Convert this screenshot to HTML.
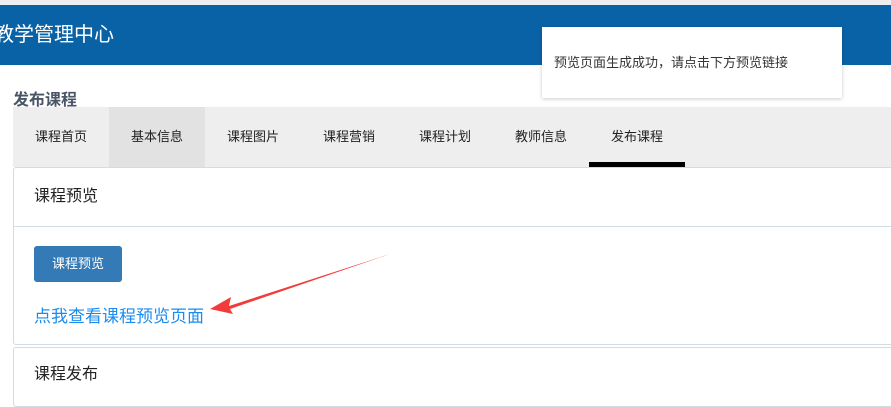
<!DOCTYPE html>
<html><head><meta charset="utf-8"><style>
body{margin:0;width:891px;height:405px;overflow:hidden;background:#fff;font-family:"Liberation Sans","Noto Sans CJK SC",sans-serif;position:relative}
.top{position:absolute;left:0;top:0;width:891px;height:5px;background:#eee}
.hdr{position:absolute;left:0;top:5px;width:891px;height:60px;background:#0a62a6;color:#fff;font-size:20px;line-height:60px}
.hdr span{position:absolute;left:-6px;top:0}
.toast{position:absolute;left:542px;top:27px;width:300px;height:71px;background:#fff;box-shadow:0 1px 4px rgba(0,0,0,.2);font-size:13px;color:#333;line-height:71px;box-sizing:border-box;padding-left:12px}
.h2{position:absolute;left:13px;top:86px;font-size:16px;font-weight:bold;color:#4a5566}
.tabs{position:absolute;left:13px;top:107px;width:878px;height:60px;background:#eee}
.tab{position:absolute;top:0;width:96px;height:60px;line-height:60px;text-align:center;font-size:13px;color:#222}
.p{position:absolute;left:13px;width:890px;background:#fff;border:1px solid #d5dbe3;border-radius:3px;box-sizing:border-box}
.ph{font-size:16px;color:#222;padding-left:20px}
</style></head><body>
<div class="top"></div>
<div class="hdr"><span>教学管理中心</span></div>
<div class="h2">发布课程</div>
<div class="tabs">
<div class="tab" style="left:0">课程首页</div>
<div class="tab" style="left:96px;background:#e2e2e2">基本信息</div>
<div class="tab" style="left:192px">课程图片</div>
<div class="tab" style="left:288px">课程营销</div>
<div class="tab" style="left:384px">课程计划</div>
<div class="tab" style="left:480px">教师信息</div>
<div class="tab" style="left:576px;border-bottom:5px solid #000;height:55px">发布课程</div>
</div>
<div class="p" style="top:167px;height:178px">
<div class="ph" style="height:58px;line-height:58px;border-bottom:1px solid #d5dbe3">课程预览</div>
<div style="position:absolute;left:20px;top:78px;width:88px;height:36px;background:#337ab7;border-radius:3px;color:#fff;font-size:13px;line-height:36px;text-align:center">课程预览</div>
<div style="position:absolute;left:20px;top:134px;font-size:17px;color:#1a8cf0">点我查看课程预览页面</div>
</div>
<svg style="position:absolute;left:0;top:0" width="891" height="405"><polygon points="390,254 229,306 231,297 210,309 233,314 230,309" fill="#f23c3c"/></svg>
<div class="p" style="top:347px;height:60px">
<div class="ph" style="line-height:54px">课程发布</div>
</div>
<div class="toast">预览页面生成成功，请点击下方预览链接</div>
</body></html>
